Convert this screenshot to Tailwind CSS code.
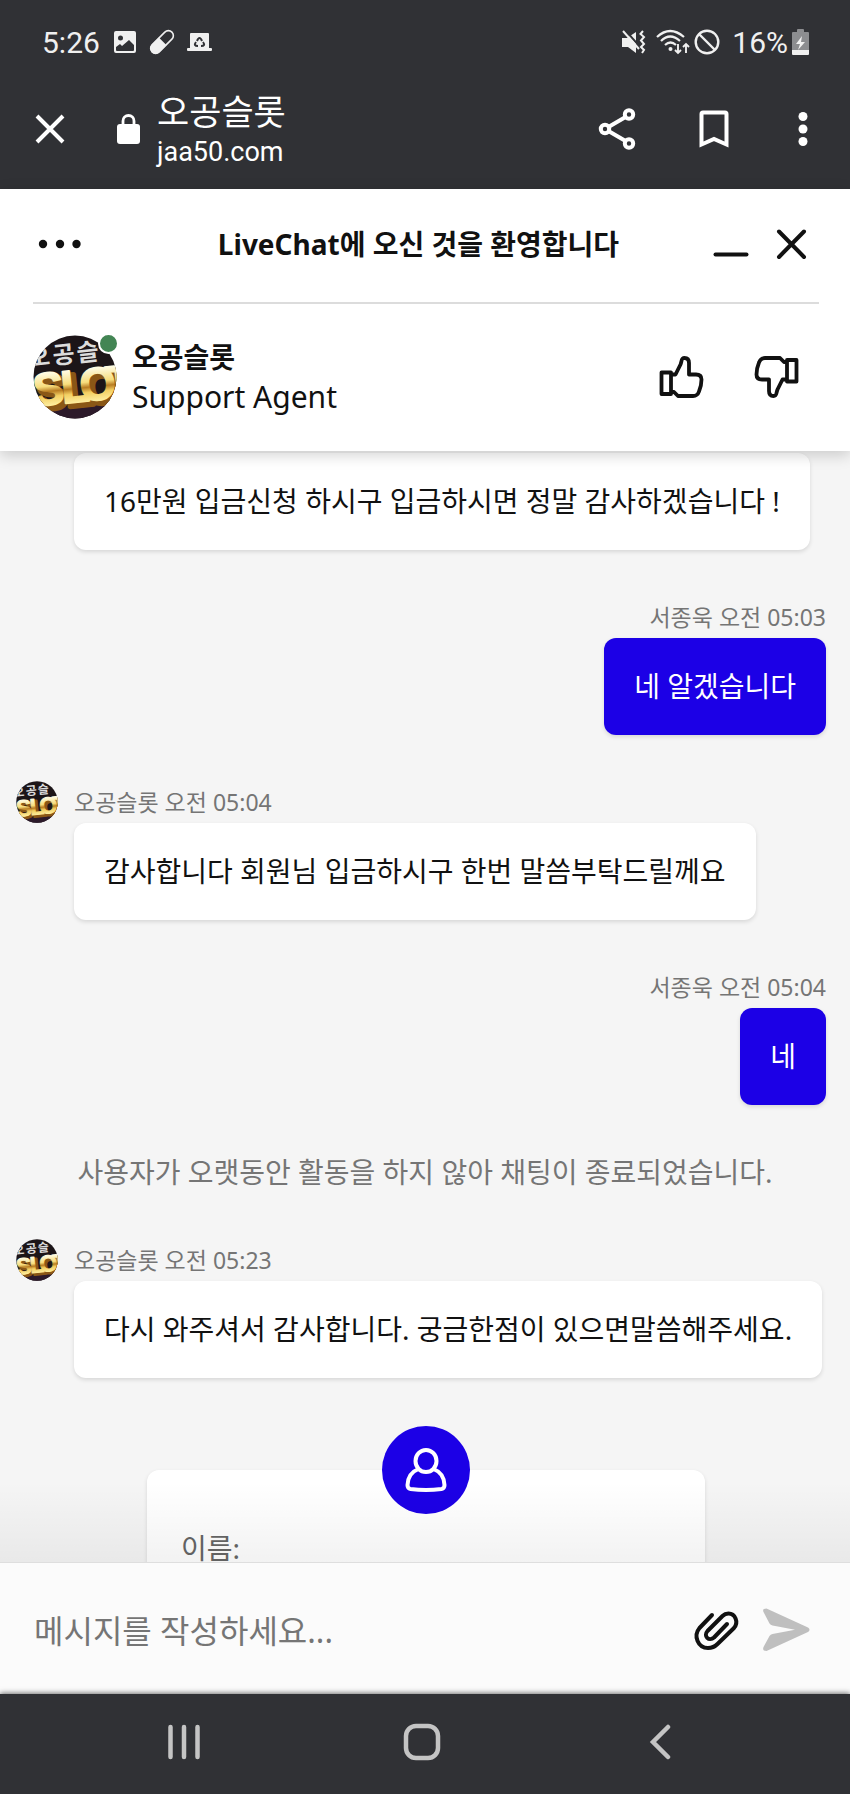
<!DOCTYPE html>
<html lang="ko">
<head>
<meta charset="utf-8">
<meta name="viewport" content="width=device-width, initial-scale=1">
<title>오공슬롯</title>
<script src="https://cdn.jsdelivr.net/npm/@tailwindcss/browser@4"></script>
</head>
<body class="flex h-screen flex-col overflow-hidden bg-[#f5f5f5] font-['Noto_Sans','Noto_Sans_CJK_KR',sans-serif] text-[28px] text-[#111]">

<svg class="absolute h-0 w-0" aria-hidden="true">
  <defs>
    <linearGradient id="gold" x1="0" y1="0" x2="0" y2="1">
      <stop offset="0.200" stop-color="#fffbe0"/>
      <stop offset=".45" stop-color="#f7dd7c"/>
      <stop offset=".55" stop-color="#b87c22"/>
      <stop offset=".65" stop-color="#f3cf62"/>
      <stop offset=".85" stop-color="#fff2a8"/>
    </linearGradient>
    <clipPath id="disc"><circle cx="42" cy="42" r="41.5"/></clipPath>
  </defs>
</svg>

<!-- Browser chrome -->
<div class="shrink-0 bg-[#303135] font-[Roboto,'Noto_Sans_CJK_KR',sans-serif] text-white">
  <div class="flex h-[84px] items-center pr-[41px] pl-[42px] text-[30px] text-[#f0f0f0]">
    <span class="w-[71px]">5:26</span>
    <svg class="h-6 w-6" viewBox="0 0 24 24"><path fill="currentColor" fill-rule="evenodd" d="M3 1h18q2 0 2 2v18q0 2-2 2H3q-2 0-2-2V3q0-2 2-2zM5 8a2.500 2.500 0 1 0 5 0a2.500 2.500 0 1 0-5 0zM3 20q0 1 1 1h16q1 0 1-1v-5l-5-5-7 6-2-2-4 3z"/></svg>
    <svg class="ml-3 h-[26px] w-[26px]" viewBox="0 0 26 26"><g transform="rotate(-45 13 13)"><rect x="-1" y="8" width="28" height="10" rx="5" fill="none" stroke="currentColor" stroke-width="1.600"/><path fill="currentColor" d="M14 7.500H4a5.500 5.500 0 0 0 0 11h10z"/></g></svg>
    <svg class="ml-3 h-5 w-[25px]" viewBox="0 0 25 20"><path fill="currentColor" d="M4 1h17q1 0 1 1v14h2q1 0 1 1v1q0 1-1 1H1q-1 0-1-1v-1q0-1 1-1h2V2q0-1 1-1z"/><path d="M10 9q2.500-6 5 0M9 10q-3 4 2 4M16 10q3 4-2 4" fill="none" stroke="#303135" stroke-width="2"/></svg>
    <span class="flex-1"></span>
    <svg class="h-6 w-[25px]" viewBox="0 0 25 24"><path fill="currentColor" d="M1 8h5l9-6v21l-8-6H1z"/><path d="M4 0l17 19" stroke="#303135" stroke-width="2"/><path d="M2 1l16 18" stroke="currentColor" stroke-width="2"/><path d="M22 1l-2.500 3L23 7l-3 3.500L23 14l-3 3 3 3-2 3" fill="none" stroke="currentColor" stroke-width="2"/></svg>
    <svg class="ml-2.5 h-[26px] w-[34px]" viewBox="0 0 34 26"><g fill="none" stroke="currentColor" stroke-width="2.200"><path d="M1 8q13-12 27 0M5 12q9-9 19 0M9 16q5.500-5 11 0"/><path d="M22 15v9m-3-3l3 3 3-3M30 24v-9m-3 3l3-3 3 3" stroke-width="1.900"/></g><circle cx="14.500" cy="20" r="2" fill="currentColor"/></svg>
    <svg class="ml-1 h-[26px] w-[26px]" viewBox="0 0 26 26" fill="none" stroke="currentColor" stroke-width="2.400"><circle cx="13" cy="13" r="11.300"/><path d="M5 5l16 16"/></svg>
    <span class="ml-3">16%</span>
    <svg class="ml-1 h-[26px] w-[17px]" viewBox="0 0 17 26"><path fill="#8c8d90" d="M5 1q0-1 1-1h5q1 0 1 1v2h4q1 0 1 1v17H0V4q0-1 1-1h4z"/><path fill="currentColor" d="M0 21h17v4q0 1-1 1H1q-1 0-1-1zM10 7l-6 8h4l-2 6 7-8H9z"/></svg>
  </div>
  <div class="flex h-[105px] items-center pr-[33px] pb-4 pl-[34px]">
    <button aria-label="닫기"><svg class="h-8 w-8" viewBox="0 0 32 32" stroke="currentColor" stroke-width="4"><path d="M3 3l26 26M29 3L3 29"/></svg></button>
    <svg class="ml-[51px] h-[30px] w-[23px]" viewBox="0 0 23 30"><rect y="10" width="23" height="20" rx="3" fill="currentColor"/><path d="M6 12V7a5.500 5.500 0 0 1 11 0v5" fill="none" stroke="currentColor" stroke-width="2.800"/></svg>
    <div class="ml-[17px] flex flex-1 flex-col pt-1.5">
      <span class="text-[35px] leading-10">오공슬롯</span>
      <span class="text-[27px] leading-9">jaa50.com</span>
    </div>
    <button aria-label="공유"><svg class="h-11 w-10" viewBox="0 0 40 44" fill="none" stroke="currentColor" stroke-width="4"><path d="M8 22L32 8M8 22l24 14"/><g fill="#303135"><circle cx="8" cy="22" r="4.200"/><circle cx="32" cy="7.500" r="4.200"/><circle cx="32" cy="36.500" r="4.200"/></g></svg></button>
    <button class="ml-[62px]" aria-label="북마크"><svg class="h-[38px] w-[30px]" viewBox="0 0 30 38" fill="none" stroke="currentColor" stroke-width="4"><path d="M2.500 34.500V4q0-1.500 1.500-1.500h22q1.500 0 1.500 1.500v30.500L15 29z"/></svg></button>
    <button class="ml-[60px]" aria-label="더보기"><svg class="h-9 w-[28px]" viewBox="0 0 28 36" fill="currentColor"><circle cx="14" cy="5.500" r="4.500"/><circle cx="14" cy="18" r="4.500"/><circle cx="14" cy="30.500" r="4.500"/></svg></button>
  </div>
</div>

<!-- Chat header -->
<header class="relative z-10 shrink-0 bg-white pr-[31px] pl-[33px] shadow-[0_4px_14px_rgba(0,0,0,0.18)]">
  <div class="flex h-[115px] items-center border-b-2 border-[#dcdcdc] pb-1">
    <button class="w-[95px]" aria-label="메뉴"><svg class="h-10 w-[54px]" viewBox="0 0 54 40" fill="currentColor"><circle cx="10" cy="20" r="4.200"/><circle cx="27" cy="20" r="4.200"/><circle cx="43.500" cy="20" r="4.200"/></svg></button>
    <h1 class="flex-1 text-center font-bold whitespace-nowrap">LiveChat에 오신 것을 환영합니다</h1>
    <button class="ml-1" aria-label="최소화"><svg class="h-10 w-9" viewBox="0 0 36 40" stroke="currentColor" stroke-width="4" stroke-linecap="round"><path d="M2.500 30.500h31"/></svg></button>
    <button class="mr-[11px] ml-[26px]" aria-label="채팅 닫기"><svg class="h-[34px] w-[33px]" viewBox="0 0 33 34" stroke="currentColor" stroke-width="4" stroke-linecap="round"><path d="M4 4.500l25 25.500M29 4.500L4 30"/></svg></button>
  </div>
  <div class="flex h-[147px] items-center pb-0.5">
    <div class="relative">
      <svg class="h-[84px] w-[84px]" viewBox="0 0 84 84" role="img" aria-label="오공슬롯">
        <g id="avatar" clip-path="url(#disc)">
          <rect width="84" height="84" fill="#1c1518"/>
          <path d="M20 76l46-14 18 4v18H20z" fill="#2c1a2a"/>
          <g transform="rotate(-6 42 42)" font-weight="700">
            <text x="-3 22 46" y="27" font-family="'Noto Sans CJK KR'" font-size="24" fill="#dcdcdc">오공슬</text>
            <g font-family="'Liberation Sans Narrow','Liberation Sans'" font-size="46" stroke-linejoin="round">
              <text x="2 31 50 76" y="71" fill="#8a5716" stroke="#8a5716" stroke-width="5">SLOT</text>
              <text x="-1 27 46 72" y="67" fill="url(#gold)" stroke="url(#gold)" stroke-width="2">SLOT</text>
            </g>
          </g>
        </g>
      </svg>
      <span class="absolute -top-[2px] -right-[2px] h-[21px] w-[21px] rounded-full border-2 border-white bg-[#438554]"></span>
    </div>
    <div class="ml-[15px] flex flex-1 flex-col">
      <span class="leading-10 font-bold">오공슬롯</span>
      <span class="text-[30px] leading-10">Support Agent</span>
    </div>
    <button aria-label="좋아요"><svg class="h-12 w-12" viewBox="0 0 48 48" fill="none" stroke="currentColor" stroke-width="3.800" stroke-linejoin="round"><path d="M4.500 19.500H14V41H4.500zM14 21.500h4.500l5-10C25 8 24 5 27.500 5Q32 5 32 10v11.500h7q5.500 0 5.500 5 0 6-2.500 12-1.500 4.500-6 4.500H21l-4-4h-3"/></svg></button>
    <button class="mr-[18px] ml-12" aria-label="싫어요"><svg class="h-12 w-12 rotate-180" viewBox="0 0 48 48" fill="none" stroke="currentColor" stroke-width="3.800" stroke-linejoin="round"><path d="M4.500 19.500H14V41H4.500zM14 21.500h4.500l5-10C25 8 24 5 27.500 5Q32 5 32 10v11.500h7q5.500 0 5.500 5 0 6-2.500 12-1.500 4.500-6 4.500H21l-4-4h-3"/></svg></button>
  </div>
</header>

<!-- Conversation -->
<main class="relative flex min-h-0 flex-1 flex-col gap-[46px] overflow-hidden pt-[2px] pr-6 pl-4">
  <div class="ml-[58px] shrink-0 self-start rounded-xl bg-white px-[30px] py-7 leading-[41px] shadow-[0_2px_4px_rgba(0,0,0,0.12)]">16만원 입금신청 하시구 입금하시면 정말 감사하겠습니다 !</div>

  <div class="flex shrink-0 flex-col items-end">
    <span class="text-[23px] leading-[42px] text-[#757575]">서종욱 오전 05:03</span>
    <div class="rounded-xl bg-[#1c00e6] px-[30px] py-7 leading-[41px] text-white shadow-[0_2px_4px_rgba(0,0,0,0.12)]">네 알겠습니다</div>
  </div>

  <div class="flex shrink-0 items-start gap-4">
    <svg class="h-[42px] w-[42px] shrink-0" viewBox="0 0 84 84" role="img" aria-label="오공슬롯"><use href="#avatar"/></svg>
    <div class="flex flex-col items-start">
      <span class="text-[23px] leading-[42px] text-[#757575]">오공슬롯 오전 05:04</span>
      <div class="rounded-xl bg-white px-[30px] py-7 leading-[41px] shadow-[0_2px_4px_rgba(0,0,0,0.12)]">감사합니다 회원님 입금하시구 한번 말씀부탁드릴께요</div>
    </div>
  </div>

  <div class="flex shrink-0 flex-col items-end">
    <span class="text-[23px] leading-[42px] text-[#757575]">서종욱 오전 05:04</span>
    <div class="rounded-xl bg-[#1c00e6] px-[30px] py-7 leading-[41px] text-white shadow-[0_2px_4px_rgba(0,0,0,0.12)]">네</div>
  </div>

  <p class="shrink-0 pl-2 text-center leading-[42px] text-[#757575]">사용자가 오랫동안 활동을 하지 않아 채팅이 종료되었습니다.</p>

  <div class="flex shrink-0 items-start gap-4">
    <svg class="h-[42px] w-[42px] shrink-0" viewBox="0 0 84 84" role="img" aria-label="오공슬롯"><use href="#avatar"/></svg>
    <div class="flex flex-col items-start">
      <span class="text-[23px] leading-[42px] text-[#757575]">오공슬롯 오전 05:23</span>
      <div class="rounded-xl bg-white px-[30px] py-7 leading-[41px] shadow-[0_2px_4px_rgba(0,0,0,0.12)]">다시 와주셔서 감사합니다. 궁금한점이 있으면말씀해주세요.</div>
    </div>
  </div>

  <form class="relative mt-[46px] mr-[121px] ml-[131px] shrink-0 rounded-xl bg-white px-[34px] pt-[58px] pb-8 shadow-[0_2px_4px_rgba(0,0,0,0.12)]">
    <span class="absolute -top-11 left-1/2 flex h-[88px] w-[88px] -translate-x-1/2 items-center justify-center rounded-full bg-[#1c00e6] text-white">
      <svg class="h-11 w-11" viewBox="0 0 44 44" fill="none" stroke="currentColor" stroke-width="4" stroke-linejoin="round"><ellipse cx="22" cy="13" rx="10.500" ry="11"/><path d="M14.500 21Q4 25 3.500 37q0 3.500 3 4 15.500 1.800 31 0 3-.5 3-4Q40 25 29.500 21"/></svg>
    </span>
    <label for="visitor-name" class="block leading-10 text-[#666]">이름:</label>
    <input id="visitor-name" type="text" class="mt-2 h-16 w-full rounded-lg border border-[#ccc] px-4">
  </form>

  <div class="pointer-events-none absolute inset-x-0 bottom-0 h-20 bg-linear-to-t from-black/5 to-transparent"></div>
</main>

<!-- Message composer -->
<form class="flex h-[132px] shrink-0 items-center border-t border-[#dedede] bg-[#fbfbfb] pt-[3px] pr-[39px] pl-[34px]">
  <input type="text" aria-label="메시지" placeholder="메시지를 작성하세요..." class="h-16 min-w-0 flex-1 bg-transparent text-[32px] outline-none placeholder:text-[#757575]">
  <button type="button" aria-label="파일 첨부"><svg class="h-[43px] w-[49px]" viewBox="0 0 49 43" fill="none" stroke="currentColor" stroke-width="4" stroke-linecap="round" stroke-linejoin="round"><path d="M20 6L7.500 19C1 27 6 39 16 39q5.500 0 9.500-4L42 19C47 13 43 4.500 36.500 4.500q-3.500 0-6 2.500L15.500 22c-4.500 5 1.500 11 6.500 6.500L35 15"/></svg></button>
  <button class="ml-[22px]" type="submit" aria-label="보내기"><svg class="h-11 w-12" viewBox="0 0 48 44" fill="#bfbfbf"><path d="M3.500.5L45 19.500q3 2 0 4.500L3.500 43Q-1 43 .5 39L6.500 28q1-1.500 3-2L32 21.700 9.500 17.500q-2-.5-3-2L.5 4Q-1 .5 3.500.5z"/></svg></button>
</form>

<!-- System navigation -->
<nav class="relative z-10 flex h-[100px] shrink-0 items-center bg-[#303135] pr-[71px] pb-1 pl-[65px] text-[#c4c4c4] shadow-[0_-1px_5px_rgba(0,0,0,0.55)]">
  <button class="flex flex-1 justify-center" aria-label="최근 앱"><svg class="h-9 w-9" viewBox="0 0 36 36" stroke="currentColor" stroke-width="4.500" stroke-linecap="round"><path d="M4.500 3v30M18 3v30M31.500 3v30"/></svg></button>
  <button class="flex flex-1 justify-center" aria-label="홈"><svg class="h-[38px] w-[38px]" viewBox="0 0 38 38" fill="none" stroke="currentColor" stroke-width="4.500"><rect x="3" y="3" width="32" height="32" rx="10"/></svg></button>
  <button class="flex flex-1 justify-center" aria-label="뒤로"><svg class="h-9 w-6" viewBox="0 0 24 36" fill="none" stroke="currentColor" stroke-width="4.500" stroke-linecap="round"><path d="M20 3L5 18l15 15"/></svg></button>
</nav>
</body>
</html>
